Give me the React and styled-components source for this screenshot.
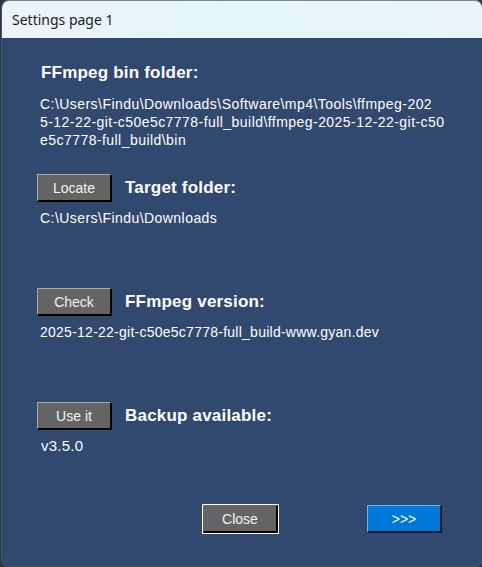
import React from "react";
import styled, { createGlobalStyle } from "styled-components";

const GlobalStyle = createGlobalStyle`
  html, body {
    margin: 0;
    padding: 0;
    background: #2b3748;
  }
  body {
    width: 482px;
    height: 567px;
    overflow: hidden;
    font-family: "Liberation Sans", Arial, sans-serif;
  }
`;

const Window = styled.div`
  width: 480px;
  height: 565px;
  margin: 0 0 0 1px;
  border: 1px solid #4a5566;
  border-top-color: #7f8894;
  border-radius: 8px;
  overflow: hidden;
  display: flex;
  flex-direction: column;
  background: #31486f;
`;

const TitleBar = styled.div`
  height: 37px;
  flex-shrink: 0;
  display: flex;
  align-items: center;
  padding-left: 10px;
  background: linear-gradient(90deg, #eef3fa 0%, #e3f6f8 45%, #e9f4f9 100%);
  font-family: "Noto Sans", "Open Sans", sans-serif;
  font-size: 14px;
  color: #1b1b1b;
`;

const Body = styled.div`
  flex: 1;
  display: flex;
  flex-direction: column;
  padding: 25px 40px 0 35px;
`;

const Heading = styled.div`
  font-weight: 700;
  font-size: 17px;
  letter-spacing: 0.2px;
  line-height: 20px;
  color: #ffffff;
  padding-left: ${(p) => p.$indent || 0}px;
`;

const Value = styled.div`
  font-size: ${(p) => p.$size || 14}px;
  letter-spacing: ${(p) => p.$spacing ?? 0.25}px;
  line-height: 18px;
  color: #ffffff;
  white-space: nowrap;
  margin-top: ${(p) => p.$top || 0}px;
  padding-left: ${(p) => p.$indent || 3}px;
`;

const Row = styled.div`
  display: flex;
  align-items: center;
  gap: 13px;
  margin-top: ${(p) => p.$top || 0}px;
`;

const Button = styled.button`
  width: 75px;
  height: 28px;
  box-sizing: border-box;
  padding: 0;
  font-family: "Liberation Sans", Arial, sans-serif;
  font-size: ${(p) => p.$size || 14}px;
  color: #f2f2f2;
  background: #646464;
  border-style: solid;
  border-width: 1px 2px 2px 1px;
  border-color: #a8a8a8 #000000 #000000 #a8a8a8;
  cursor: pointer;
`;

const DefaultButton = styled(Button)`
  outline: 1px solid #ffffff;
  outline-offset: 0;
  border-color: #646464 #000000 #000000 #646464;
`;

const BlueButton = styled(Button)`
  background: #0078d7;
  border-color: #6bb4f2 #0c1626 #0c1626 #6bb4f2;
  color: #ffffff;
`;

const Footer = styled.div`
  display: flex;
  justify-content: flex-end;
  gap: 89px;
  margin-top: 50px;
`;

// label wraps at a fixed width, same breaks as the app
const binFolder = [
  "C:\\Users\\Findu\\Downloads\\Software\\mp4\\Tools\\ffmpeg-202",
  "5-12-22-git-c50e5c7778-full_build\\ffmpeg-2025-12-22-git-c50",
  "e5c7778-full_build\\bin",
];

export default function App() {
  return (
    <>
      <GlobalStyle />
      <Window>
        <TitleBar>Settings page 1</TitleBar>
        <Body>
          <Heading $indent={4}>FFmpeg bin folder:</Heading>
          <Value $top={12} $spacing={0.45}>
            {binFolder.map((line) => (
              <div key={line}>{line}</div>
            ))}
          </Value>
          <Row $top={25}>
            <Button>Locate</Button>
            <Heading>Target folder:</Heading>
          </Row>
          <Value $top={7} $spacing={0.45}>
            C:\Users\Findu\Downloads
          </Value>
          <Row $top={61}>
            <Button>Check</Button>
            <Heading>FFmpeg version:</Heading>
          </Row>
          <Value $top={7}>2025-12-22-git-c50e5c7778-full_build-www.gyan.dev</Value>
          <Row $top={61}>
            <Button>Use it</Button>
            <Heading>Backup available:</Heading>
          </Row>
          <Value $top={7} $size={15} $indent={4}>
            v3.5.0
          </Value>
          <Footer>
            <DefaultButton>Close</DefaultButton>
            <BlueButton>&gt;&gt;&gt;</BlueButton>
          </Footer>
        </Body>
      </Window>
    </>
  );
}
